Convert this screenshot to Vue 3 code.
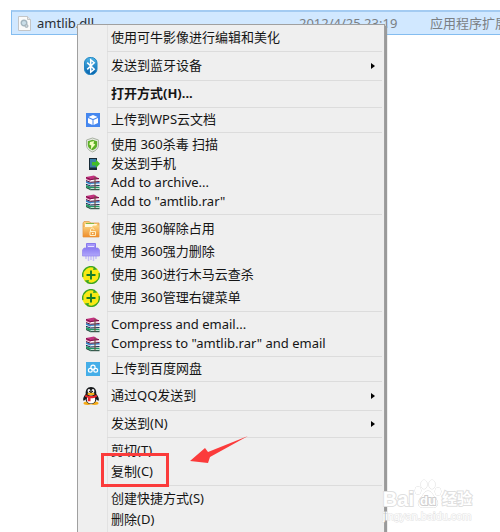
<script setup>
import { ref } from "vue";

const active = ref('');

const groups = [
  { size: 'single', items: [{ text: '使用可牛影像进行编辑和美化' }] },
  { size: 'tall', items: [{ text: '发送到蓝牙设备', icon: 'bluetooth', sub: true }] },
  { size: 'single', items: [{ text: '打开方式(H)...', bold: true }] },
  { size: 'short', items: [{ text: '上传到WPS云文档', icon: 'wps' }] },
  {
    size: 'short',
    items: [
      { text: '使用 360杀毒 扫描', icon: 'shield' },
      { text: '发送到手机', icon: 'phone' },
      { text: 'Add to archive...', icon: 'rar' },
      { text: 'Add to "amtlib.rar"', icon: 'rar' }
    ]
  },
  {
    size: 'loose',
    items: [
      { text: '使用 360解除占用', icon: 'folder' },
      { text: '使用 360强力删除', icon: 'shredder' },
      { text: '使用 360进行木马云查杀', icon: 'plus' },
      { text: '使用 360管理右键菜单', icon: 'plus' }
    ]
  },
  {
    size: 'even',
    items: [
      { text: 'Compress and email...', icon: 'rar' },
      { text: 'Compress to "amtlib.rar" and email', icon: 'rar' }
    ]
  },
  { size: 'short', items: [{ text: '上传到百度网盘', icon: 'cloud' }] },
  { size: 'tall', items: [{ text: '通过QQ发送到', icon: 'qq', sub: true }] },
  { size: 'single', items: [{ text: '发送到(N)', sub: true }] },
  { size: 'single', items: [{ text: '剪切(T)' }, { text: '复制(C)', marked: true }] },
  { size: 'single', items: [{ text: '创建快捷方式(S)' }, { text: '删除(D)' }] }
];
</script>

<template>
  <svg class="symbols" aria-hidden="true">
    <defs>
      <linearGradient id="blue" x1="0" y1="0" x2="0" y2="1">
        <stop offset="0" stop-color="#4db4e6" />
        <stop offset="1" stop-color="#0562ad" />
      </linearGradient>
      <linearGradient id="orange" x1="0" y1="0" x2="0" y2="1">
        <stop offset="0" stop-color="#fbd27c" />
        <stop offset="1" stop-color="#ee8d2c" />
      </linearGradient>
      <linearGradient id="purple" x1="0" y1="0" x2="0" y2="1">
        <stop offset="0" stop-color="#8b7bf2" />
        <stop offset="1" stop-color="#b0a6fb" />
      </linearGradient>
    </defs>
    <symbol id="bluetooth" viewBox="0 0 18 18">
      <rect x="2.5" y="0.5" width="12.5" height="17" rx="5.5" fill="url(#blue)" stroke="#2387c4" />
      <path d="M5.2 5.6l7 6.6-3.5 3V2.8l3.5 3-7 6.6" fill="none" stroke="#fff" stroke-width="1.5" />
    </symbol>
    <symbol id="wps" viewBox="0 0 18 18">
      <rect x="4" y="2" width="14" height="14" fill="#4587ef" />
      <path d="M11 4l4.5 2-4.5 2-4.5-2z" fill="#fff" />
      <path d="M6 7l4.500 2v5L6 12zM16 7l-4.500 2v5l4.500-2z" fill="#fff" />
    </symbol>
    <symbol id="shield" viewBox="0 0 18 18">
      <path d="M10.5 2l6 2v5c0 3.5-2.5 5.500-6 7-3.5-1.500-6-3.500-6-7V4z" fill="#e7eae4" stroke="#a9b2a3" />
      <path d="M10.5 3.800l4.700 1.500V9c0 2.500-2 4.200-4.700 5.200C8 13.200 5.800 11.500 5.800 9V5.300z" fill="#5caf25" />
      <path d="M12 5l-4 1-.7 2.500 2 1-.5 4 4.500-5-1.800-.7z" fill="#f3ffc0" />
    </symbol>
    <symbol id="phone" viewBox="0 0 18 18">
      <rect x="7.5" y="3.5" width="7" height="11" fill="#3c7fa6" stroke="#172a36" />
      <path d="M8 12.500h6v2H8z" fill="#172a36" />
      <path d="M10 7h4V4.500L18 8.700 14 13v-2.500h-4z" fill="#42bd28" />
    </symbol>
    <symbol id="rar" viewBox="0 0 18 18">
      <path d="M4 3l8-1.500L17 4.500V6L8.500 7 4 5z" fill="#c2327f" />
      <path d="M4 3.500l4.500 2L17 4.500" fill="none" stroke="#7a1148" />
      <path d="M8.500 6.700l9-1" stroke="#fff" />
      <path d="M4 7l4.500 1.700L17.500 8v2l-9 .7L4 8.700z" fill="#2b7fc4" />
      <path d="M4 6.500l4.500 1.800 9-.8" fill="none" stroke="#5b1640" />
      <path d="M8.500 10.400l9-.4" stroke="#fff" />
      <path d="M4 11l4.500 1.700h9v2.500h-9L4 13z" fill="#1f9a63" />
      <path d="M4 10.300l4.500 1.700 9-.5" fill="none" stroke="#1b2552" />
      <path d="M8.500 14.600h9" stroke="#fff" stroke-width=".8" />
      <path d="M4 13.500l4.500 2.200h9" fill="none" stroke="#143e31" />
      <path d="M12 3l2-.5v13h-2z" fill="#6d5040" opacity=".55" />
    </symbol>
    <symbol id="folder" viewBox="0 0 18 18">
      <path d="M1 3l1-1.500h5L9 3h8v14H1z" fill="url(#orange)" stroke="#e0943d" stroke-width=".7" />
      <path d="M3 4h12l-1 3H3z" fill="#fff9df" />
      <path d="M4 3.500h8" stroke="#84b845" />
      <path d="M1.500 7H10l1-1.500h6V17H1.500z" fill="url(#orange)" />
      <path d="M8.500 11.500V10c0-2.500 3.500-2.500 3.500 0M8 11.500h5.500v4H8z" fill="none" stroke="#fff0c6" />
      <circle cx="10.800" cy="13.500" r=".8" fill="#fff" />
    </symbol>
    <symbol id="shredder" viewBox="0 0 18 18">
      <path d="M4 12v4M6.500 12v6M9 12v5M11.500 12v6M14 12v4" stroke="#c3bcf8" stroke-width="1.400" />
      <path d="M4.500.5h9V5h-9z" fill="#a597fa" stroke="#8879ec" />
      <path d="M2 5h14l1.500 2v6H.5V7z" fill="url(#purple)" stroke="#9385ed" stroke-width=".7" />
      <path d="M6 3.500h6" stroke="#e6e1ff" />
    </symbol>
    <symbol id="plus" viewBox="0 0 18 18">
      <circle cx="9" cy="9" r="8.700" fill="#f8e914" />
      <path d="M1 11A8.200 8.200 0 0 1 13 1.800M17 7A8.200 8.200 0 0 1 5 16.200" fill="none" stroke="#39a527" stroke-width="1.400" />
      <path d="M12 .5l3.500 3-4.500.5zM6 17.500l-3.500-3 4.500-.5z" fill="#39a527" />
      <path d="M9 4.500v9M4.500 9h9" stroke="#167d2a" stroke-width="1.900" />
    </symbol>
    <symbol id="cloud" viewBox="0 0 18 18">
      <rect x="4" y="2" width="14" height="14" fill="#45aee8" />
      <g fill="none" stroke="#fff" stroke-width="1.200">
        <circle cx="11" cy="7.300" r="2.100" />
        <circle cx="8.300" cy="10.300" r="1.900" />
        <circle cx="13.700" cy="10.300" r="1.900" />
      </g>
    </symbol>
    <symbol id="qq" viewBox="0 0 18 18">
      <ellipse cx="5.500" cy="16.200" rx="4" ry="1.700" fill="#f5aa16" />
      <ellipse cx="12.500" cy="16.200" rx="4" ry="1.700" fill="#f5aa16" />
      <path d="M9 0c4 0 5.500 3 5.300 7 2 2.500 3 4.500 2.400 6.500-.7.600-1.500-.5-2.200-1.300C14 15 12 17 9 17s-5-2-5.500-4.800C2.800 13 2 14 1.300 13.500.7 11.500 1.700 9.500 3.700 7 3.500 3 5 0 9 0z" fill="#17191b" />
      <ellipse cx="9" cy="12.500" rx="4.200" ry="3.900" fill="#fff" />
      <ellipse cx="7" cy="4" rx="1.400" ry="1.900" fill="#fff" />
      <ellipse cx="11" cy="4" rx="1.400" ry="1.900" fill="#fff" />
      <circle cx="7.500" cy="4.300" r=".6" />
      <circle cx="10.500" cy="4.300" r=".6" />
      <ellipse cx="9" cy="7" rx="3.600" ry="1.200" fill="#f8b219" />
      <path d="M3.500 7.500c3 2 8 2 11 0l.5 2.200c-2 1-4 1.500-6.500 1.500v3H5.700l.2-3.400L3 9.700z" fill="#e8262c" />
    </symbol>
  </svg>

  <main class="explorer">
    <div class="file-row">
      <span class="file-name">
        <svg class="file-icon" viewBox="0 0 13 15" aria-hidden="true">
          <path d="M.5.5h9l3 3v11H.5z" fill="#fafafa" stroke="#c3c5c7" />
          <path d="M9.500.5v3h3" fill="#e4e6e8" stroke="#c3c5c7" />
          <circle cx="6" cy="7" r="2.800" fill="#c9dde8" stroke="#a3b5bf" stroke-width="1.400" />
          <circle cx="8.500" cy="10" r="1.500" fill="#c5d0d6" stroke="#a9b4bb" />
        </svg>
        amtlib.dll
      </span>
      <span class="file-date">2012/4/25 23:19</span>
      <span class="file-type">应用程序扩展</span>
    </div>

    <div class="menu" role="menu">
      <div v-for="(group, i) in groups" :key="i" class="group" :class="group.size">
        <button
          v-for="item in group.items"
          :key="item.text"
          type="button"
          role="menuitem"
          class="item"
          :class="{ bold: item.bold, active: active === item.text }"
          @click="active = item.text"
        >
          <span class="icon">
            <svg v-if="item.icon" width="18" height="18" aria-hidden="true"><use :href="'#' + item.icon" /></svg>
          </span>
          <span class="label">{{ item.text }}</span>
          <svg v-if="item.sub" class="arrow" viewBox="0 0 4 6" aria-hidden="true"><path d="M0 0l4 3-4 3z" /></svg>
          <span v-if="item.marked" class="mark"></span>
          <svg v-if="item.marked" class="pointer" viewBox="0 0 58 27" aria-hidden="true">
            <path d="M0 25L15 12l3 4L58 0 20 21l-2 6z" fill="#fb3b3b" />
          </svg>
        </button>
      </div>
    </div>

    <div class="watermark">
      <div class="brand">
        <span>Bai</span>
        <svg class="paw" viewBox="0 0 28 30" aria-hidden="true">
          <g fill="#fff" stroke="#d9d9d9">
            <ellipse cx="4" cy="11.500" rx="3" ry="4" />
            <ellipse cx="10" cy="5.500" rx="3" ry="4.400" />
            <ellipse cx="18" cy="5.500" rx="3" ry="4.400" />
            <ellipse cx="24" cy="12.500" rx="3" ry="4" />
            <path d="M14 12c3.500 0 4.500 4 7 6.500 3.500 3.500 4 10-1.500 10h-11c-5.500 0-5-6.500-1.500-10 2.500-2.500 3.500-6.500 7-6.500z" />
          </g>
          <text x="14" y="26" text-anchor="middle">du</text>
        </svg>
        <span class="brand-cn">经验</span>
      </div>
      <div class="site">jingyan.baidu.com</div>
    </div>
  </main>
</template>

<style>
body {
  margin: 0;
  background: #fff;
}
</style>

<style scoped>
.symbols {
  position: absolute;
  width: 0;
  height: 0;
}

.explorer {
  position: relative;
  box-sizing: border-box;
  height: 100vh;
  padding: 10px 0 0 11px;
  overflow: hidden;
  font-family: "Noto Sans", "Noto Sans CJK SC", sans-serif;
  font-size: 13px;
}

.file-row {
  display: grid;
  grid-template-columns: 287px 131px 1fr;
  align-items: center;
  border: 1px solid #84bdf0;
  border-top: 2px solid #a3cbf2;
  border-right: 0;
  background: #d1e8ff;
  line-height: 22px;
  white-space: nowrap;
  color: #7b7f84;
}

.file-name {
  display: flex;
  align-items: center;
  gap: 6px;
  padding-left: 6px;
  color: #2b2f33;
}

.file-icon {
  width: 13px;
  height: 15px;
}

.menu {
  position: absolute;
  top: 24px;
  left: 77px;
  right: 115px;
  padding-bottom: 24px;
  border: 1px solid #a0a0a0;
  background: linear-gradient(to right, #efefef 29px, #e2e2e2 29px, #e2e2e2 30px, #efefef 30px);
  box-shadow: 2px 2px 1px #9a9a9a;
}

.group {
  padding: 2px 0 3px;
}

/* divider starts at the icon gutter */
.group + .group {
  padding-top: 0;
}

.group + .group::before {
  content: "";
  display: block;
  height: 1px;
  margin: 0 2px 2px 29px;
  background: #dcdcdc;
}

.item {
  position: relative;
  display: flex;
  align-items: center;
  width: 100%;
  padding: 0;
  border: 0;
  background: none;
  color: #151515;
  font: inherit;
  line-height: 19px;
  text-align: left;
  white-space: nowrap;
}

.item:hover,
.item.active {
  background: #dbe9f7;
}

.icon {
  display: flex;
  width: 29px;
  height: 18px;
  padding-left: 4px;
  box-sizing: border-box;
}

.label {
  flex: 1;
  padding-left: 4px;
}

.single .item {
  line-height: 21px;
}

.tall .item,
.loose .item {
  line-height: 23px;
}

.loose {
  padding-bottom: 2px;
}

.group.even::before {
  margin-bottom: 3px;
}

.bold {
  font-weight: bold;
}

.arrow {
  width: 4px;
  height: 6px;
  margin-right: 9px;
}

.mark {
  position: absolute;
  top: -8px;
  left: 23px;
  width: 62px;
  height: 28px;
  border: 3px solid #fb3b3b;
}

.pointer {
  position: absolute;
  top: -25px;
  left: 112px;
  width: 58px;
  height: 27px;
}

.watermark {
  position: absolute;
  right: 28px;
  bottom: 8px;
  color: #fff;
  font-family: "Liberation Sans", "Noto Sans CJK SC", sans-serif;
  -webkit-text-stroke: 2px #dfdfdf;
  paint-order: stroke fill;
}

.brand {
  display: flex;
  align-items: flex-end;
  font-size: 20px;
  font-weight: bold;
  line-height: 20px;
}

.brand-cn {
  font-size: 15px;
}

.paw {
  width: 28px;
  height: 30px;
  font-size: 13px;
}

.paw text {
  fill: #fff;
  stroke: #cfcfcf;
  stroke-width: 2px;
}

.site {
  font-size: 11px;
  line-height: 15px;
  -webkit-text-stroke: 1px #e2e2e2;
}
</style>
